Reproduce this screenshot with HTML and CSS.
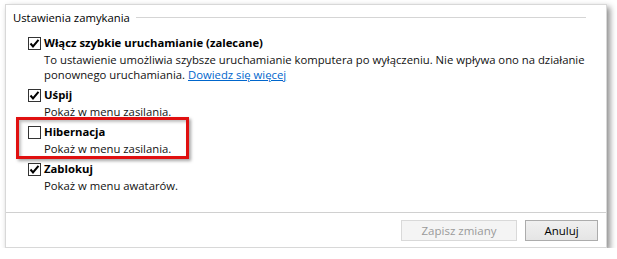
FILE: index.html
```html
<!DOCTYPE html>
<html lang="pl">
<head>
<meta charset="utf-8">
<link rel="stylesheet" href="styles.css">
</head>
<body>
<div class="window">
  <div class="content">
    <div class="group-head">
      <span class="group-title">Ustawienia zamykania</span>
      <span class="group-line"></span>
    </div>
    <div class="options">
      <div class="option">
        <div class="opt-row">
          <span class="cb checked"><svg viewBox="0 0 11 11" width="11" height="11"><path d="M1.5 5.5 L4 8.5 L9.5 1.8" fill="none" stroke="#000" stroke-width="2"/></svg></span>
          <span class="opt-label">Włącz szybkie uruchamianie (zalecane)</span>
        </div>
        <div class="opt-desc">To ustawienie umożliwia szybsze uruchamianie komputera po wyłączeniu. Nie wpływa ono na działanie<br>ponownego uruchamiania. <a class="link" href="#">Dowiedz się więcej</a></div>
      </div>
      <div class="option">
        <div class="opt-row">
          <span class="cb checked"><svg viewBox="0 0 11 11" width="11" height="11"><path d="M1.5 5.5 L4 8.5 L9.5 1.8" fill="none" stroke="#000" stroke-width="2"/></svg></span>
          <span class="opt-label">Uśpij</span>
        </div>
        <div class="opt-desc">Pokaż w menu zasilania.</div>
      </div>
      <div class="option">
        <div class="opt-row">
          <span class="cb"></span>
          <span class="opt-label">Hibernacja</span>
        </div>
        <div class="opt-desc">Pokaż w menu zasilania.</div>
      </div>
      <div class="option">
        <div class="opt-row">
          <span class="cb checked"><svg viewBox="0 0 11 11" width="11" height="11"><path d="M1.5 5.5 L4 8.5 L9.5 1.8" fill="none" stroke="#000" stroke-width="2"/></svg></span>
          <span class="opt-label">Zablokuj</span>
        </div>
        <div class="opt-desc">Pokaż w menu awatarów.</div>
      </div>
    </div>
  </div>
  <div class="footer">
    <button class="btn btn-disabled" disabled>Zapisz zmiany</button>
    <button class="btn">Anuluj</button>
  </div>
  <div class="highlight"></div>
</div>
</body>
</html>
```
FILE: styles.css
```css
* { box-sizing: border-box; }
html, body { margin: 0; padding: 0; background: #fff; }
body {
  font-family: "Open Sans", "Noto Sans", sans-serif;
  font-size: 11.3px;
  color: #000;
}
.window {
  position: relative;
  margin: 4px 0 0 5px;
  width: 602px;
  height: 244px;
  background: #fff;
  border: 1px solid #d8d8d8;
  box-shadow: 3px 3px 6px rgba(0,0,0,0.45);
  display: flex;
  flex-direction: column;
}
.content {
  flex: 1;
  padding: 4px 20px 0 7px;
  border-bottom: 1px solid #d0d0d0;
}
.group-head {
  display: flex;
  align-items: center;
  gap: 6px;
  height: 17px;
}
.group-title { line-height: 17px; white-space: nowrap; }
.group-line { flex: 1; height: 1px; background: #d5d5d5; }
.options {
  margin-top: 8px;
  padding-left: 15px;
}
.option { margin-bottom: 4px; }
.opt-row {
  display: flex;
  align-items: center;
  height: 18px;
}
.cb {
  width: 13px;
  height: 13px;
  border: 1px solid #333;
  background: #fff;
  margin-right: 3px;
  display: flex;
  align-items: center;
  justify-content: center;
}
.cb svg { display: block; }
.opt-label { font-weight: bold; line-height: 18px; }
.opt-desc {
  margin-top: 0;
  padding-left: 16px;
  line-height: 15px;
  color: #111;
  white-space: nowrap;
}
.link { color: #0066cc; text-decoration: underline; }
.footer {
  height: 34px;
  display: flex;
  justify-content: flex-end;
  align-items: center;
  gap: 8px;
  padding: 0 8px 0 0;
}
.btn {
  font-family: inherit;
  font-size: 11.5px;
  height: 21px;
  padding: 0;
  border: 1px solid #acacac;
  background: linear-gradient(#f0f0f0, #e5e5e5);
  color: #000;
  width: 73px;
}
.btn-disabled {
  width: 116px;
  color: #9a9a9a;
  border-color: #d9d9d9;
  background: #f4f4f4;
}
.highlight {
  position: absolute;
  left: 10px;
  top: 112px;
  width: 173px;
  height: 42px;
  border: 3px solid #e01010;
  box-shadow: 2px 2px 3px rgba(0,0,0,0.35), inset 2px 2px 3px rgba(0,0,0,0.25);
  pointer-events: none;
}
```
